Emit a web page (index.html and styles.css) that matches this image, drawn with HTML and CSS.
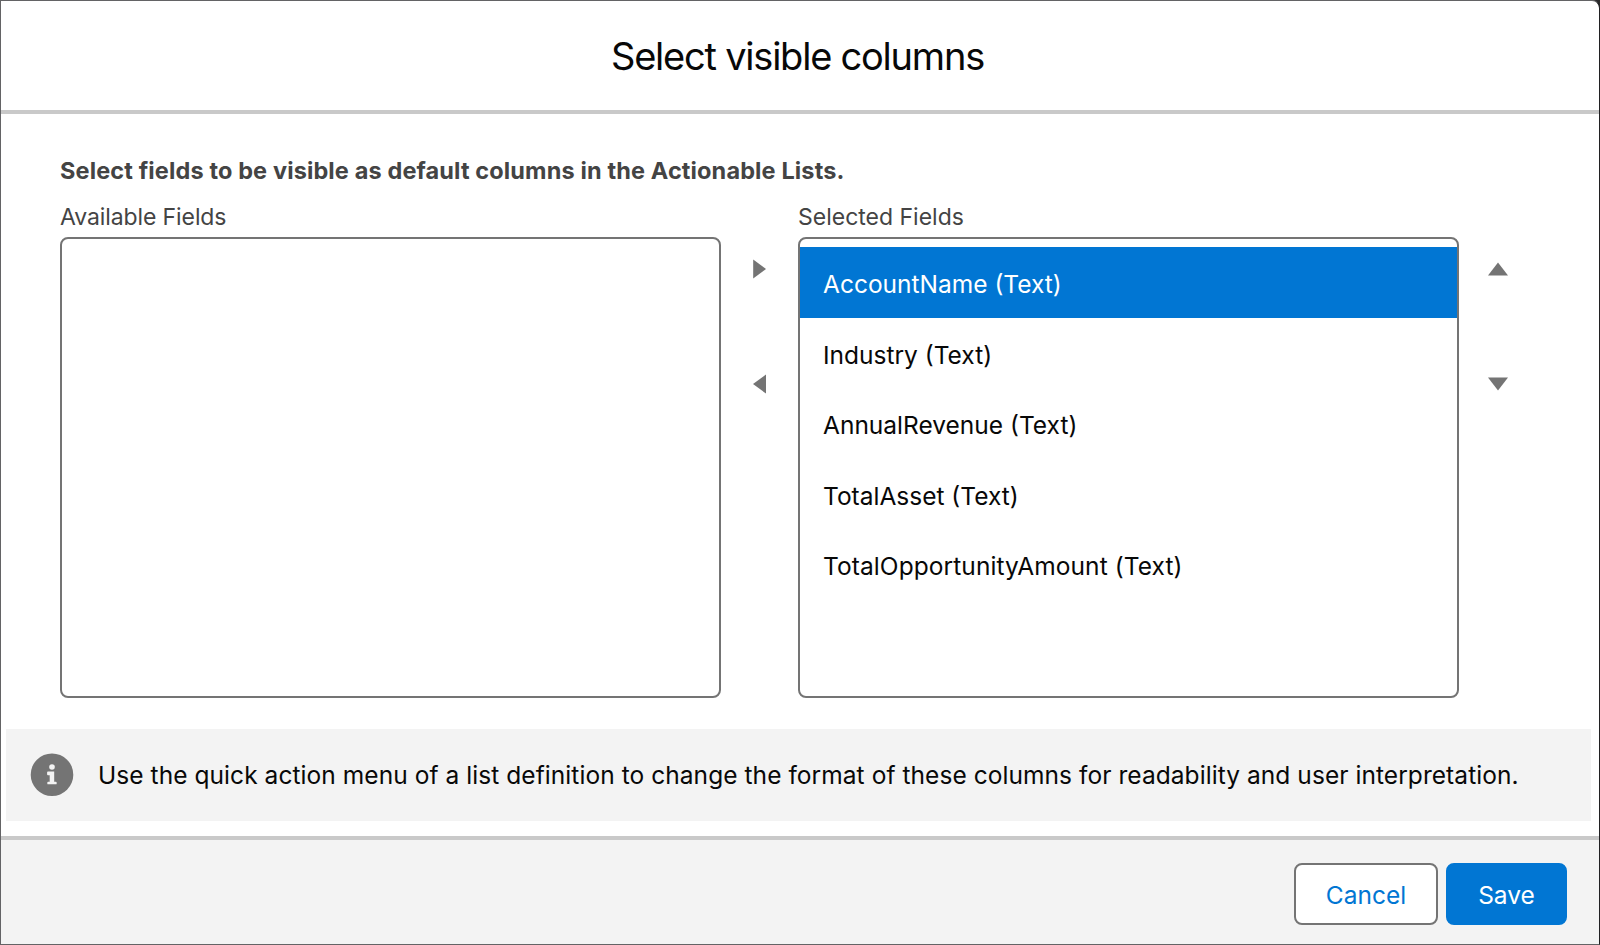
FILE: index.html
```html
<!DOCTYPE html>
<html lang="en">
<head>
  <meta charset="UTF-8">
  <meta name="viewport" content="width=device-width, initial-scale=1.0">
  <title>Select visible columns</title>
  <link rel="stylesheet" href="styles.css">
</head>
<body>

  <div class="modal">
    <header class="modal-header">
      <h2>Select visible columns</h2>
    </header>

    <div class="modal-content">
      <p class="intro">Select fields to be visible as default columns in the Actionable Lists.</p>

      <div class="dueling-list">
        <div class="list-column">
          <span class="list-label available">Available Fields</span>
          <ul class="list-box"></ul>
        </div>

        <div class="list-buttons">
          <button type="button" class="icon-button" aria-label="Move to Selected Fields">
            <svg width="20" height="20" viewBox="0 0 20 20"><path d="M3.2 0.6L16 10L3.2 19.6Z"/></svg>
          </button>
          <button type="button" class="icon-button" aria-label="Move to Available Fields">
            <svg width="20" height="20" viewBox="0 0 20 20"><path d="M16 0.6L3 10L16 19.6Z"/></svg>
          </button>
        </div>

        <div class="list-column">
          <span class="list-label">Selected Fields</span>
          <ul class="list-box">
            <li class="option active">AccountName (Text)</li>
            <li class="option">Industry (Text)</li>
            <li class="option">AnnualRevenue (Text)</li>
            <li class="option">TotalAsset (Text)</li>
            <li class="option amount">TotalOpportunityAmount (Text)</li>
          </ul>
        </div>

        <div class="list-buttons">
          <button type="button" class="icon-button" aria-label="Move up">
            <svg width="20" height="20" viewBox="0 0 20 20"><path d="M0 16.4L10 3.4L20 16.4Z"/></svg>
          </button>
          <button type="button" class="icon-button" aria-label="Move down">
            <svg width="20" height="20" viewBox="0 0 20 20"><path d="M0 3.6L10 16.6L20 3.6Z"/></svg>
          </button>
        </div>
      </div>
    </div>

    <div class="notice">
      <svg class="info-icon" width="44" height="44" viewBox="0 0 44 44">
        <circle cx="22" cy="21.7" r="21.3" fill="#747474"/>
        <circle cx="22" cy="14" r="2.8" fill="#f3f3f3"/>
        <path d="M18 18.6h6.2v10.2h1.6q.9 0 .9.9v.7q0 .9-.9.9h-7.6q-.9 0-.9-.9v-.7q0-.9.9-.9h1.5v-6.6h-1.7q-.9 0-.9-.9v-1.8q0-.9.9-.9z" fill="#f3f3f3"/>
      </svg>
      <p class="notice-text">Use the quick action menu of a list definition to change the format of these columns for readability and user interpretation.</p>
    </div>

    <footer class="modal-footer">
      <button type="button" class="button neutral">Cancel</button>
      <button type="button" class="button brand">Save</button>
    </footer>
  </div>

</body>
</html>
```
FILE: styles.css
```css
* {
  margin: 0;
  padding: 0;
  box-sizing: border-box;
}

body {
  font-family: Inter, "Liberation Sans", sans-serif;
  background-color: #2b2b2b;
  color: #080808;
  height: 945px;
  overflow: hidden;
}

/* Modal */
.modal {
  display: flex;
  flex-direction: column;
  height: 945px;
  background-color: #fff;
  border: 1px solid #636365;
  border-right-color: #202022;
  border-radius: 0 8px 0 0;
}

.modal-header {
  height: 113px;
  border-bottom: 4px solid #c9c9c9;
  text-align: center;
}

h2 {
  font-size: 38px;
  font-weight: 400;
  line-height: 46px;
  letter-spacing: -1.22px;
  padding: 32px 5px 0 0;
}

.modal-content {
  height: 615px;
  padding: 43px 0 0 59px;
}

.intro {
  font-size: 23.5px;
  font-weight: 700;
  line-height: 28px;
  letter-spacing: 0.13px;
  color: #444;
  white-space: nowrap;
}

/* Dueling list */
.dueling-list {
  display: flex;
  padding-top: 18px;
}

.list-column {
  width: 661px;
}

.list-label {
  display: block;
  font-size: 23px;
  line-height: 28px;
  color: #444;
}

.list-label.available {
  letter-spacing: -0.1px;
}

.list-box {
  height: 461px;
  margin-top: 6px;
  padding-top: 8px;
  border: 2px solid #747474;
  border-radius: 8px;
  list-style: none;
}

.option {
  height: 70.6px;
  padding-left: 23px;
  font-size: 24.5px;
  line-height: 74px;
  white-space: nowrap;
}

.option.amount {
  letter-spacing: 0.08px;
}

.option.active {
  background-color: #0176d3;
  color: #fff;
}

.list-buttons {
  display: flex;
  flex-direction: column;
  align-items: center;
  gap: 95px;
  width: 77px;
  padding-top: 56px;
}

.icon-button {
  width: 20px;
  height: 20px;
  border: none;
  background: none;
  cursor: pointer;
}

.icon-button svg {
  display: block;
  fill: #747474;
}

/* Notice */
.notice {
  display: flex;
  align-items: center;
  gap: 24px;
  height: 92px;
  margin: 0 8px 15px 5px;
  padding-left: 24px;
  background-color: #f3f3f3;
}

.notice-text {
  font-size: 24.5px;
  line-height: 30px;
  letter-spacing: 0.06px;
  white-space: nowrap;
}

/* Footer */
.modal-footer {
  display: flex;
  justify-content: flex-end;
  gap: 8px;
  flex: 1;
  padding: 23px 32px 0 0;
  border-top: 4px solid #c9c9c9;
  background-color: #f3f3f3;
}

.button {
  height: 62px;
  padding-top: 1px;
  border: 2px solid #747474;
  border-radius: 8px;
  font-family: inherit;
  font-size: 24.5px;
  cursor: pointer;
}

.neutral {
  width: 144px;
  background-color: #fff;
  color: #0176d3;
}

.brand {
  width: 121px;
  background-color: #0176d3;
  border-color: #0176d3;
  color: #fff;
}
```
